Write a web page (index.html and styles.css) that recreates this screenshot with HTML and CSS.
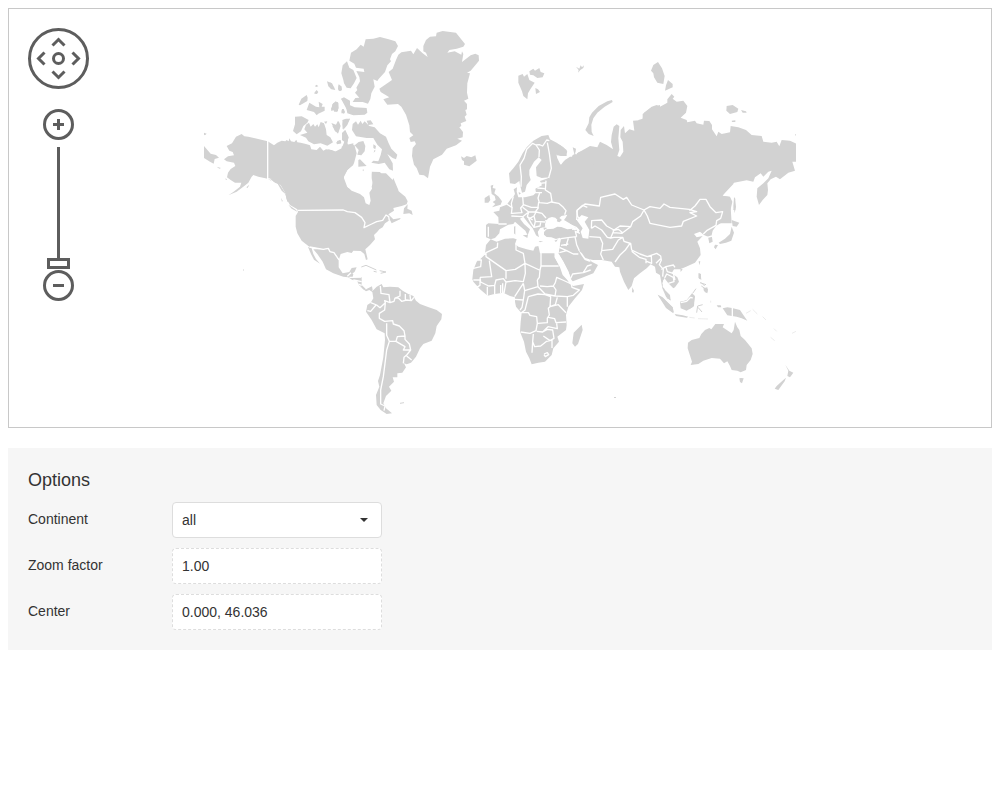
FILE: index.html
```
<!DOCTYPE html>
<html lang="en">
<head>
<meta charset="utf-8">
<title>World map</title>
<link rel="stylesheet" href="styles.css">
</head>
<body>
<main class="demo">
<section class="map" aria-label="Map">
<svg class="world" viewBox="9 9 982 418" role="img" aria-label="World map">
<defs><clipPath id="extent"><rect x="204" y="20" width="592" height="400"/></clipPath></defs>
<g clip-path="url(#extent)">
<!-- Alaska, western Canada -->
<g transform="translate(200 20) scale(.33333)">
<path class="land" d="M108 350 125 342 133 349 145 350 165 355 203 364 222 376 232 368 245 362 256 364 260 360 266 364 268 355 273 364 283 366 289 359 292 367 302 368 318 372 330 376 334 388 350 390 360 380 370 392 378 388 395 390 410 396 425 392 425 380 435 376 460 370V435L442 450 432 467 432 482 440 500 450 508 470 545H262L256 522 245 512 232 490 220 486 203 476 175 470 160 465 155 470 145 488 130 500 110 515 85 526 100 516 120 500 124 488 105 488 92 480 81 472 84 458 92 447 106 438 102 428 80 424 72 418 84 409 102 406 98 396 88 392 80 378 96 370Z"/>
<path class="land" d="M10 376 32 401 48 405 57 413 44 417 41 431 30 425 10 413ZM12 338 20 341 15 346 11 344ZM50 440 63 444 58 446ZM139 502 148 494 143 504ZM76 475 81 478 78 481ZM296 254 304 236 320 225 323 233 322 243 300 256ZM344 217 350 210 355 216 351 222 343 221ZM345 198 350 194 355 199 348 201ZM381 184 396 190 406 210 394 208 385 199ZM415 196 424 198 426 209 420 214 414 208ZM320 270 328 248 348 260 358 262 356 245 368 252 365 260 374 260 374 272 355 281 350 286 342 276ZM393 266 400 249 406 250 414 246 416 264 411 277 404 269 394 273ZM423 236 432 232 450 242V280L440 268ZM424 273 430 267 435 276 430 281ZM285 290 305 289 326 300 322 308 310 318 303 334 290 343 279 333 285 313ZM300 345 322 338 313 328 318 314 327 308 332 320 340 312 345 320 352 313 356 322 362 306 372 310 378 328 380 345 391 352 399 367 382 377 362 370 342 373 325 364 318 353ZM394 309 408 314 414 302 420 318 414 338 405 334 400 321ZM427 300 438 296 450 296 442 315 430 329ZM426 340 436 330 446 352 441 368 427 360ZM411 363 422 360 424 370 413 371ZM372 305 382 304 378 312Z"/>
<path class="border" d="M203 363V476L212 477 222 489 232 482 244 497 259 521"/>
</g>
<!-- Arctic archipelago, Greenland -->
<g transform="translate(330 20) scale(.33333)">
<path class="land" d="M-5 388 15 395 35 385 43 365 47 362 58 380 73 374 80 400 72 430 52 450 42 470 40 490 48 515H-5ZM125 455 150 456 165 475 175 498 183 492 190 474 205 510V520H130L125 500 130 480Z"/>
<path class="land" d="M63 98 80 88 92 74 101 80 107 58 130 56 150 51 176 58 196 64 204 78 196 94 186 102 180 118 183 124 172 136 165 156 146 177 142 183 130 178 134 200 124 220 121 237 114 251 98 246 68 246 76 234 88 233 75 218 82 210 79 203 90 184 88 171 79 153 103 156 101 146 78 143 73 131 58 122ZM51 124 58 143 70 150 80 174 72 190 62 205 50 203 42 190 40 180 34 160 38 136ZM33 236 48 242 57 254 74 262 110 264 112 278 104 284 70 286 52 280 46 250ZM7 253 17 244 25 249 24 273 14 276 6 264ZM36 267 42 268 44 280 34 280ZM26 192 34 200 34 212 26 212ZM0 187 14 205 0 205ZM7 318 20 316 26 303 32 318 24 341 14 330ZM40 300 60 296 48 316 38 328 37 312ZM37 338 45 331 55 352 52 372 36 360ZM18 368 30 360 33 370 22 373ZM68 312 78 304 84 314 92 302 97 312 104 304 118 318 134 322 150 340 168 350 176 370 184 386 202 404 198 418 188 414 172 402 188 430 189 452 178 448 164 428 146 432 124 428 130 422 145 424 152 405 156 388 142 374 130 354 110 354 78 349 66 330ZM110 302 122 301 130 313 115 315ZM86 366 100 363 106 378 104 394 94 406 82 404 86 390 74 376ZM85 420 90 418 110 438 85 440ZM130 373 138 378 136 388 130 384ZM133 390 137 392 131 398ZM97 450 101 448 101 454Z"/>
<path class="land" d="M188 146 198 120 205 104 214 97 243 92 250 103 261 84 278 100 293 111 288 98 280 94 280 78 288 60 300 50 318 49 320 38 338 33 378 38 405 72 400 80 380 86 358 90 352 98 374 94 394 104 396 94 400 102 396 126 422 106 436 101 446 106 447 122 422 152 411 158 420 160 412 190 411 218 415 236 402 242 411 252 411 268 406 270 410 284 404 290 409 303 392 310 394 318 388 322 399 336 398 352 382 356 396 362 378 376 350 386 336 404 310 418 300 440 294 475 282 466 268 464 260 444 252 434 246 408 248 384 258 372 254 364 242 366 238 354 250 346 240 336 238 316 228 284 214 260 204 252 172 254 160 238 178 232 152 216 148 206 186 180 176 156Z"/>
<path class="land" d="M393 409 402 414 410 408 424 412 436 406 440 422 418 439 402 434 402 424 396 420Z"/>
</g>
<!-- Canada, USA, Mexico -->
<g transform="translate(260 180) scale(.33333)">
<path class="land" d="M28-5 45 8 62 15 76 40 80 58 90 75 112 88 114 96 107 108 107 140 112 160 125 182 148 200 190 208 205 205 210 215 222 218 237 238 242 222 262 216 275 219 280 212 302 213 313 222 318 240 323 238 316 208 330 195 345 178 342 165 352 155 358 148 368 142 375 130 390 120 395 130 420 118 422 114 400 118 385 103 402 92 400 84 425 78 440 73 443 64 436 50 415 33 403 8 398 0 378-20H335V-5L340 20 328 38 332 62 328 75 317 70 312 52 300 42 275 32 262 22 252-5Z"/>
<path class="land" d="M430 102 432 85 443 73 442 86 455 92 458 105 448 100ZM85 74 108 90 112 95 95 86ZM63 53 68 62 66 66ZM160 208 190 208 205 206 210 216 222 219 236 240 236 262 248 280 268 276 275 264 290 262 284 275 273 284 264 292 250 290 220 280 198 268 188 245 172 222ZM144 201 155 205 160 222 168 237 180 251 162 239 153 222ZM262 290 272 279 280 282 278 291 305 292 305 315 318 328 336 319 338 330 312 329 296 314 292 304 276 299Z"/>
<path class="isle" d="M304 261 318 256 336 264 349 270M359 272 378 276M341 274 350 276"/>
<path class="border" d="M114 91 250 90 262 95 285 98 305 112 315 128 312 143 335 132 350 125 368 121 378 105 386 110 388 122M149 201 190 208 205 205 210 215 222 218 237 240M262 289 273 278M268 292 278 292 303 291M280 300 305 305M295 312 305 316"/>
</g>
<!-- South America -->
<g transform="translate(340 270) scale(.33333)">
<path class="land" d="M60 50 78 60 88 55 98 62 110 50 125 42 130 52 150 50 175 52 188 62 205 72 220 78 228 92 240 102 262 110 290 120 306 132 304 148 290 168 286 190 275 212 250 222 240 235 228 260 213 278 200 283 192 280 198 292 187 308 172 310 172 322 158 322 162 335 147 350 154 362 138 378 130 400 138 415 156 430 140 432 122 420 110 405 108 375 118 350 114 333 120 315 130 262 135 210 134 190 110 178 95 150 78 125 82 105 92 98 100 85 97 66 88 60 78 64Z"/>
<path class="isle" d="M180 400 192 398M122 10 138 6"/>
<path class="border" d="M92 98 110 105 120 113 136 98 134 92 150 98 147 74 123 70 121 48M82 122 92 124 108 105M136 98 134 120 118 130 118 145 134 154 158 152 160 162 178 168 192 182 195 198 172 200 168 214 148 214 140 196 140 160M150 98 162 94 165 84 180 78 180 62M165 84 175 84 185 94 200 90 214 92 222 82M196 72 196 90M210 75 212 92M195 198 195 208 208 222 212 240 190 240 195 230 168 214M212 240 200 255 192 262 190 280M200 258 215 270M148 214 140 240 135 280 130 320 122 360 122 402 135 408 132 422"/>
</g>
<!-- Russia and northern Asia -->
<g transform="translate(510 50) scale(.33333)">
<path class="land" d="M112 260 122 275 150 285 170 300 170 318 152 318 138 312 142 325 152 346 165 330 180 320 195 320 188 292 198 296 196 312 215 302 240 288 262 292 270 275 290 285 309 298 303 276 305 255 311 230 320 223 328 228 325 265 328 300 322 318 330 321 340 305 338 275 331 262 332 240 342 228 345 250 358 238 373 242 369 212 398 210 398 192 415 180 425 172 450 165V480H140L120 360Z"/>
<path class="land" d="M25 77 38 72 42 80 52 72 58 90 74 98 61 118 54 130 52 148 40 138 36 124 25 98ZM58 64 70 56 75 62 88 54 92 66 103 70 98 82 82 84 70 76 60 74ZM76 114 84 118 90 126 78 132ZM198 50 208 56 212 46 216 52 222 46 220 54 211 60 204 68 206 60ZM226 240 236 220 238 202 246 188 266 168 292 154 306 150 308 156 284 170 262 188 250 205 244 224 245 246 251 258 236 252Z"/>
</g>
<g transform="translate(640 50) scale(.33333)">
<path class="land" d="M-5 210 8 206 12 188 35 170 50 165 60 170 82 158 82 148 95 132 103 140 98 146 110 155 130 152 142 168 138 188 122 203 140 210 142 217 165 212 170 220 190 224 192 212 208 213 216 225 216 238 230 259 235 245 245 252 270 247 272 228 295 232 318 240 335 255 365 258 370 275 395 278 410 275 418 289 425 270 450 272 475 284V335H457L465 362 445 368 420 388 408 380 392 388 382 400 384 420 382 435 368 450 357 465 350 440 352 415 370 400 385 385 395 362 385 365 370 380 362 370 345 382 340 395 320 391 282 398 262 418 247 437 270 441 275 520H-5Z"/>
<path class="land" d="M54 36 66 55 74 78 70 102 52 98 42 82 40 70 33 62 40 45ZM84 90 98 102 98 112 75 122 78 106ZM260 168 278 165 295 176 292 186 270 192 259 182ZM303 180 318 184 320 188 308 188ZM275 212 286 211 286 216 276 216ZM465 252 470 254 466 257ZM282 442 286 446 286 480 280 480Z"/>
</g>
<!-- Europe -->
<g transform="translate(460 120) scale(.33333)">
<path class="land" d="M147 160 160 145 175 125 188 100 200 82 220 62 245 48 265 45 270 58 290 68 310 82 322 95 315 108 290 106 288 102 293 125 304 136 310 125 330 125 338 105 400 80V335L350 330 330 318 310 304 255 300 262 318 240 325 232 335 237 354 228 345 218 325 205 310 190 290 180 296 192 312 210 328 203 346 196 332 182 320 165 305 160 312 145 314 120 328 118 340 105 354 92 358 78 352 78 315 85 310 116 312 115 292 100 276 118 272 120 262 140 254 152 238 160 230 165 222 161 208 171 202 170 215 175 232 195 232 220 226 228 218 226 206 246 196 240 183 260 176 269 172 245 174 230 168 228 142 245 120 236 112 222 125 208 150 208 165 212 180 200 195 195 215 186 218 180 195 178 183 165 192 150 190Z"/>
<path class="land" d="M92 197 100 194 98 204 107 206 103 220 116 230 126 244 122 254 96 262 106 252 98 246 107 240 104 228 95 222ZM74 234 88 225 91 240 85 248 74 248ZM176 216 183 220 177 224ZM162 320 166 318 166 344 162 340ZM188 346 204 344 202 354ZM236 362 252 363 240 366ZM283 362 294 358 288 366Z"/>
<path class="border" d="M183 200 184 170 180 135 192 115 200 88 218 70 228 75 238 74 248 78 260 60 268 62M228 75 238 90 237 112M262 68 268 100 274 145 266 174M258 182 256 210 272 220 276 245 262 250 238 248 234 234 240 216M240 190 258 188M232 204 254 206M226 218 246 218M160 230 154 250 156 265 154 282M188 230 190 255 182 264 186 278 156 280M190 254 214 262 234 262 236 246M236 262 226 276 206 276 188 262M206 276 188 290 154 288M206 276 202 290 208 296 222 288 228 276 246 280 258 294M222 288 226 304 256 306M206 296 214 310 222 322 240 318 242 308M226 304 222 322M115 312 140 312M85 320V350M140 252 158 264M202 290 218 300"/>
</g>
<!-- Africa, Middle East -->
<g transform="translate(460 230) scale(.33333)">
<path class="land" d="M92 28 110 35 135 26 160 25 170 28 165 42 175 50 200 58 220 62 225 50 235 48 245 55 275 62 286 62 284 82 300 112 308 135 322 150 330 162 340 168 372 162 366 180 345 205 325 230 318 255 320 285 318 300 292 320 297 335 280 355 275 375 255 395 235 398 215 403 208 385 198 365 192 335 180 305 182 275 185 250 168 230 165 215 165 202 150 198 130 188 100 193 83 197 60 178 40 155 37 148 40 120 50 95 75 70 78 45ZM365 284 368 300 354 342 345 350 337 340 341 308Z"/>
<path class="land" d="M295 70 302 28 340 10H455V90H400L388 88 395 95 414 105 400 130 370 142 335 155 325 125 310 95Z"/>
<path class="border" d="M113 38 112 52 78 68 55 90 64 90 62 110 40 115M78 68V80L138 122 138 146M88 92 95 140 60 142M138 122 166 118 195 100 190 70 168 60 168 42M195 100 238 120M243 54V108H296M243 108 240 120 238 142 232 150M195 102 196 130 190 155 165 152 138 156M232 150 234 170 194 182 190 160M234 170 255 192 285 198 288 180 280 168 286 158M280 168 262 170 240 168M286 158 290 142 308 150 334 162M334 162 336 172 358 180 340 196 322 200 286 198M322 200V230M40 150H60V166L50 172M60 142 62 156 86 168 104 166 108 150 130 146 138 156 132 190M82 197V170M104 166V192M122 165V190M128 160V190M164 200 180 175 190 160M164 208 190 210 194 182M190 210 186 232 180 240M205 200 195 240 184 248H205L210 256 230 260 232 280 228 302 210 310 182 306M205 200 234 192 255 194 272 200 270 230 265 235 268 255 262 264 262 278 234 280M270 230 286 224 292 202M270 230 295 224 318 248M265 262 284 266 288 278 318 276M290 280 292 296 264 290 248 306 230 304M248 306 262 298 278 300 282 325 270 332 250 318M220 312 218 335 216 368M218 335 224 350 242 348 260 334 276 330 276 354M252 372 262 368 266 374 256 380 252 374"/>
</g>
<!-- Central, South and East Asia -->
<g transform="translate(560 180) scale(.33333)">
<path class="land" d="M-10-5H520V12L487 47 510 50 517 65 512 88 500 112 484 128 468 138 458 152 455 165 458 185 448 190 444 170 432 165 420 155 402 162 410 172 428 168 412 185 420 205 422 225 405 248 375 262 360 268 342 268 335 280 352 292 357 305 345 322 340 325 325 310 313 294 307 310 315 330 330 345 332 362 318 350 307 325 300 285 288 278 285 260 272 253 260 265 240 280 222 295 215 318 205 330 192 305 180 275 178 262 165 260 155 245 125 240 95 238 75 225 60 212 50 235 5 225 4 172-10 160Z"/>
<path class="land" d="M523 50 528 80 524 100 521 78ZM515 120 538 128 530 140 518 138ZM515 140 522 158 514 182 498 188 480 192 476 188 495 176 510 162ZM465 194 474 195 467 208 462 202ZM416 244 421 244 418 256ZM217 322 222 332 220 338 216 336ZM416 280 422 282 424 300 416 294ZM430 325 442 322 443 335 432 334ZM293 344 312 358 338 382 340 400 318 384ZM360 365 382 362 396 344 404 350 402 378 380 392 362 385ZM361 266 368 268 362 276Z"/>
<path class="isle" d="M424 308 434 318M408 326 398 340"/>
<path class="sea" d="M50 120 65 105 85 112 74 125 88 150 85 176 68 174 62 155 68 145Z"/>
<path class="border" d="M50 120 52 90 75 72 118 78 122 52 165 42 190 58 200 52 215 75 252 90 242 108 218 125 212 140 180 138 162 150 140 138 125 120 95 122 94 145M252 90 270 80 300 85 312 72 330 82 388 88 410 95 390 98 410 108 370 124 365 138 330 142 270 130 262 108 252 90M388 92 405 78 420 58 438 58 450 80 468 98 488 95 482 115 470 122 468 136 440 152 430 162M94 145 105 138 125 150 142 172 152 174 162 150M88 170 120 172 128 190 125 212 122 222 130 240M125 212 158 208 175 180 188 172 162 172 152 174M188 172 192 184 210 190 196 210 180 225 165 246M158 152 175 148 188 158 212 140M160 158 188 160M192 184 212 190 215 210 240 222 262 230 290 220 302 228 304 240 298 254 310 268 308 290M215 214 238 232 258 238V250M262 230 274 228 275 250 260 244M288 250 304 234M304 268 318 260 340 255 345 262M318 262 322 275 340 280 345 300M314 294 320 282 340 292 342 305 325 310M312 300 310 320 322 330M442 172 456 168"/>
</g>
<!-- Black Sea, eastern Mediterranean, Turkey -->
<g transform="translate(460 120) scale(.33333)">
<path class="sea" d="M256 328 255 312 260 300 266 294 276 291 286 293 292 299 290 304 298 307 306 300 298 294 304 288 322 284 318 292 312 300 326 308 340 318 350 328 340 334ZM228 345 240 330 256 330V350L275 356 302 356 296 400H240ZM345 98 355 95 348 104Z"/>
<path class="land" d="M252 336 260 328 280 326 292 320 304 321 322 328 338 326 346 334 350 352 336 354 318 352 305 358 300 353 288 357 274 352 260 351 252 344ZM250 322 262 324 252 330ZM283 362 294 358 288 366ZM236 363 250 364 240 367ZM226 328 240 325 233 336 237 352 228 346Z"/>
<path class="border" d="M274 246 296 250 310 262 318 272 314 284M326 312 348 322 358 332M336 328 350 326 356 338M350 272 368 256 382 262M350 272 353 290 366 300M303 356 330 352 350 350M350 350 346 334 360 340M325 355 318 378M303 376 325 372"/>
</g>
<!-- Red Sea, Persian Gulf, Arabian borders -->
<g transform="translate(460 230) scale(.33333)">
<path class="sea" d="M355 60 366 70 376 84 388 88 393 94 404 90 388 95 374 90 364 76ZM283 64 291 78 296 72 310 95 325 124 334 149 345 162 330 160 318 142 300 110 284 82Z"/>
<path class="border" d="M298 68 320 62 340 72 355 72M320 62 298 52M345 20 350 44 358 62M332 145 338 132 370 128 392 120M370 128 382 108 395 104"/>
</g>
<!-- Oceania -->
<g transform="translate(640 250) scale(.33333)">
<path class="land" d="M285 215 292 232 298 240 302 258 315 270 335 295 338 312 332 330 320 345 318 360 302 367 292 362 275 360 270 348 262 334 252 340 240 326 215 324 190 332 175 342 152 345 156 335 143 295 144 278 155 270 178 264 184 252 195 240 208 234 214 238 226 222 252 222 248 232 275 250 281 240ZM298 385 303 384 311 385 306 400 300 396ZM436 344 448 362 460 368 450 382 442 378 445 362ZM438 383 434 394 415 420 404 416 410 408 430 390ZM230 166 242 166 244 172 234 172ZM248 175 262 172 276 174 300 180 310 195 322 212 305 205 290 200 262 196ZM53 134 68 142 98 172 102 188 88 180 72 160ZM104 192 128 196 145 200 140 203 108 198ZM120 156 140 150 156 130 165 138 160 170 148 178 126 174ZM176 70 183 72 180 88 176 84ZM196 118 204 116 202 130 194 126ZM82 132 92 150 80 145Z"/>
<path class="isle" d="M170 188 173 168 188 164M174 172 186 186M180 98 198 104M184 108 196 116"/>
<path class="isle faint" d="M212 152V158M174 206 204 207M148 202 164 204M318 190 332 182M338 178 352 192M368 200 378 210M402 236 410 244M392 262 404 272M456 250 468 244"/>
<path class="border" d="M277 173V206M122 158 140 154 152 142 158 144"/>
</g>
<path class="isle thin" d="M243 270H244M614 397.500H616"/>
</g>
</svg>
<div class="controls">
<div class="pan">
<button class="pan-button up" aria-label="Pan up"><svg viewBox="0 0 15 10"><path d="M1.500 8.500 7.500 2.500 13.500 8.500"/></svg></button>
<button class="pan-button left" aria-label="Pan left"><svg viewBox="0 0 10 15"><path d="M8.500 1.500 2.500 7.500 8.500 13.500"/></svg></button>
<button class="pan-button home" aria-label="Reset view"></button>
<button class="pan-button right" aria-label="Pan right"><svg viewBox="0 0 10 15"><path d="M1.500 1.500 7.500 7.500 1.500 13.500"/></svg></button>
<button class="pan-button down" aria-label="Pan down"><svg viewBox="0 0 15 10"><path d="M1.500 1.500 7.500 7.500 13.500 1.500"/></svg></button>
</div>
<button class="zoom-button" aria-label="Zoom in"><svg viewBox="0 0 11 11"><path d="M0 5.500H11M5.500 0V11"/></svg></button>
<input class="zoom-slider" type="range" min="0" max="100" value="0" aria-label="Zoom level">
<button class="zoom-button" aria-label="Zoom out"><svg viewBox="0 0 11 11"><path d="M0 5.500H11"/></svg></button>
</div>
</section>
<section class="options">
<h2 class="caption">Options</h2>
<div class="option"><label for="continent">Continent</label><div class="field select-field"><select id="continent"><option>all</option><option>Africa</option><option>Asia</option><option>Europe</option></select></div></div>
<div class="option"><label for="zoom">Zoom factor</label><input class="field" id="zoom" type="text" value="1.00" readonly></div>
<div class="option"><label for="center">Center</label><input class="field" id="center" type="text" value="0.000, 46.036" readonly></div>
</section>
</main>
</body>
</html>
```
FILE: styles.css
```
* { box-sizing: border-box; }
body {
  margin: 8px;
  background: #fff;
  color: #333;
  font: 14px/20px "Liberation Sans", Arial, sans-serif;
}
.demo { display: flex; flex-direction: column; gap: 20px; }
.map { position: relative; border: 1px solid #c8c8c8; }
.world { display: block; width: 100%; height: auto; }
.land { fill: #d2d2d2; }
.sea { fill: #fff; }
.border { fill: none; stroke: #fff; stroke-width: 4; stroke-linejoin: round; }
.isle { fill: none; stroke: #d2d2d2; stroke-width: 3; }
.faint { stroke-width: 2; stroke: #e2e2e2; }
.thin { stroke-width: 1; }

.controls {
  position: absolute;
  top: 19px;
  left: 19px;
  display: flex;
  flex-direction: column;
  align-items: center;
}
.controls button { padding: 0; background: #fff; border: 0; cursor: pointer; }
.controls svg { display: block; fill: none; stroke: #5d5d5d; stroke-width: 3; }
.pan {
  display: grid;
  grid-template: "tl up tr" 15px "left home right" 13px "bl down br" 15px / 16px 13px 16px;
  place-content: center;
  place-items: center;
  width: 61px;
  height: 61px;
  margin-bottom: 20px;
  background: #fff;
  border: 3px solid #5d5d5d;
  border-radius: 50%;
}
.up { grid-area: up; align-self: start; }
.left { grid-area: left; justify-self: start; }
.right { grid-area: right; justify-self: end; }
.down { grid-area: down; align-self: end; }
.up svg, .down svg { width: 15px; height: 10px; }
.left svg, .right svg { width: 10px; height: 15px; }
.controls .home {
  grid-area: home;
  width: 13px;
  height: 13px;
  border: 3px solid #5d5d5d;
  border-radius: 50%;
}
.controls .zoom-button {
  display: grid;
  place-items: center;
  width: 31px;
  height: 31px;
  border: 3px solid #5d5d5d;
  border-radius: 50%;
}
.zoom-button svg { width: 11px; height: 11px; }
.zoom-slider {
  appearance: none;
  writing-mode: vertical-lr;
  direction: rtl;
  width: 23px;
  height: 122px;
  margin: 7px 0 1px;
  background: linear-gradient(#5d5d5d, #5d5d5d) center / 3px 100% no-repeat;
}
.zoom-slider::-webkit-slider-thumb {
  appearance: none;
  width: 23px;
  height: 11px;
  background: #fff;
  border: 3px solid #5d5d5d;
}

.options {
  display: flex;
  flex-direction: column;
  gap: 10px;
  padding: 20px;
  background: #f6f6f6;
}
.caption { margin: 0; font-size: 18px; font-weight: 400; line-height: 24px; }
.option { display: flex; }
.option label { width: 144px; line-height: 34px; }
.field {
  width: 210px;
  height: 36px;
  padding: 0 9px;
  background: #fff;
  border: 1px dashed #ddd;
  border-radius: 4px;
  color: #333;
  font: inherit;
}
.select-field { position: relative; padding: 0; border-style: solid; }
.select-field select {
  appearance: none;
  width: 100%;
  height: 100%;
  padding: 0 9px;
  background: none;
  border: 0;
  color: inherit;
  font: inherit;
}
.select-field::after {
  content: "";
  position: absolute;
  top: 15px;
  right: 13px;
  border: 4px solid transparent;
  border-top-color: #333;
  border-bottom: 0;
  pointer-events: none;
}
```
